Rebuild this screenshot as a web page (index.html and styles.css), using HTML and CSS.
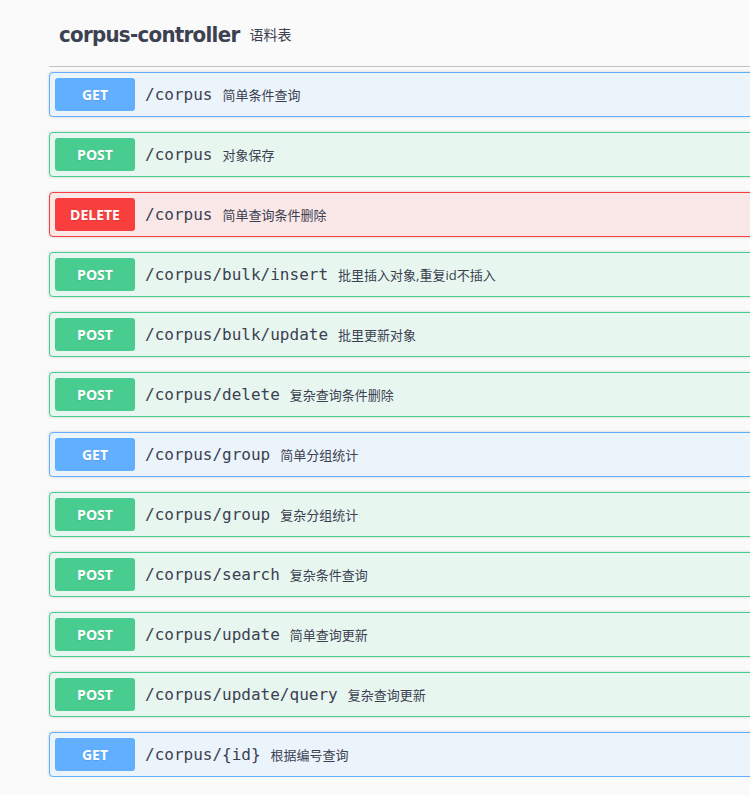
FILE: index.html
```html
<!DOCTYPE html>
<html>
<head>
<meta charset="utf-8">
<link rel="stylesheet" href="styles.css">
</head>
<body>
<div class="wrapper">
  <h4 class="tag">
    <span class="tag-name">corpus-controller</span>
    <span class="tag-desc">语料表</span>
  </h4>
  <div class="ops">
    <div class="opblock get"><span class="method">GET</span><span class="path">/corpus</span><span class="desc">简单条件查询</span></div>
    <div class="opblock post"><span class="method">POST</span><span class="path">/corpus</span><span class="desc">对象保存</span></div>
    <div class="opblock delete"><span class="method">DELETE</span><span class="path">/corpus</span><span class="desc">简单查询条件删除</span></div>
    <div class="opblock post"><span class="method">POST</span><span class="path">/corpus/bulk/insert</span><span class="desc">批里插入对象,重复id不插入</span></div>
    <div class="opblock post"><span class="method">POST</span><span class="path">/corpus/bulk/update</span><span class="desc">批里更新对象</span></div>
    <div class="opblock post"><span class="method">POST</span><span class="path">/corpus/delete</span><span class="desc">复杂查询条件删除</span></div>
    <div class="opblock get"><span class="method">GET</span><span class="path">/corpus/group</span><span class="desc">简单分组统计</span></div>
    <div class="opblock post"><span class="method">POST</span><span class="path">/corpus/group</span><span class="desc">复杂分组统计</span></div>
    <div class="opblock post"><span class="method">POST</span><span class="path">/corpus/search</span><span class="desc">复杂条件查询</span></div>
    <div class="opblock post"><span class="method">POST</span><span class="path">/corpus/update</span><span class="desc">简单查询更新</span></div>
    <div class="opblock post"><span class="method">POST</span><span class="path">/corpus/update/query</span><span class="desc">复杂查询更新</span></div>
    <div class="opblock get"><span class="method">GET</span><span class="path">/corpus/{id}</span><span class="desc">根据编号查询</span></div>
  </div>
</div>
</body>
</html>
```
FILE: styles.css
```css
html, body {
  margin: 0;
  padding: 0;
  background: #fafafa;
  overflow: hidden;
}
.wrapper {
  padding-left: 49px;
  width: 760px;
  color: #3b4151;
}
.tag {
  display: flex;
  align-items: center;
  margin: 0 0 5px;
  padding: 18px 20px 16px 10px;
  border-bottom: 1px solid rgba(59, 65, 81, 0.3);
  height: 32px;
}
.tag-name {
  font-family: "DejaVu Sans Condensed", "DejaVu Sans", sans-serif;
  font-weight: bold;
  font-size: 22px;
  letter-spacing: -0.7px;
  color: #3b4151;
}
.tag-desc {
  font-family: "Open Sans", "Noto Sans CJK SC", sans-serif;
  font-weight: normal;
  font-size: 14px;
  margin-left: 10px;
  color: #3b4151;
}
.ops {
  display: flex;
  flex-direction: column;
  gap: 15px;
}
.opblock {
  display: flex;
  align-items: center;
  padding: 5px;
  border: 1px solid;
  border-radius: 4px;
  box-shadow: 0 0 3px rgba(0, 0, 0, 0.19);
  height: 33px;
}
.opblock.get { background: #ebf3fb; border-color: #61affe; }
.opblock.post { background: #e8f6f0; border-color: #49cc90; }
.opblock.delete { background: #fae7e7; border-color: #f93e3e; }
.method {
  box-sizing: border-box;
  width: 80px;
  height: 33px;
  display: flex;
  align-items: center;
  justify-content: center;
  border-radius: 3px;
  color: #fff;
  font-family: "Open Sans", "Noto Sans", sans-serif;
  font-weight: bold;
  font-size: 14px;
  text-shadow: 0 1px 0 rgba(0, 0, 0, 0.1);
}
.get .method { background: #61affe; }
.post .method { background: #49cc90; }
.delete .method { background: #f93e3e; }
.path {
  padding: 0 10px;
  font-family: "DejaVu Sans Mono", monospace;
  font-weight: normal;
  font-size: 16px;
  color: #3b4151;
}
.desc {
  font-family: "Open Sans", "Noto Sans CJK SC", sans-serif;
  font-size: 13px;
  color: #3b4151;
}
```
